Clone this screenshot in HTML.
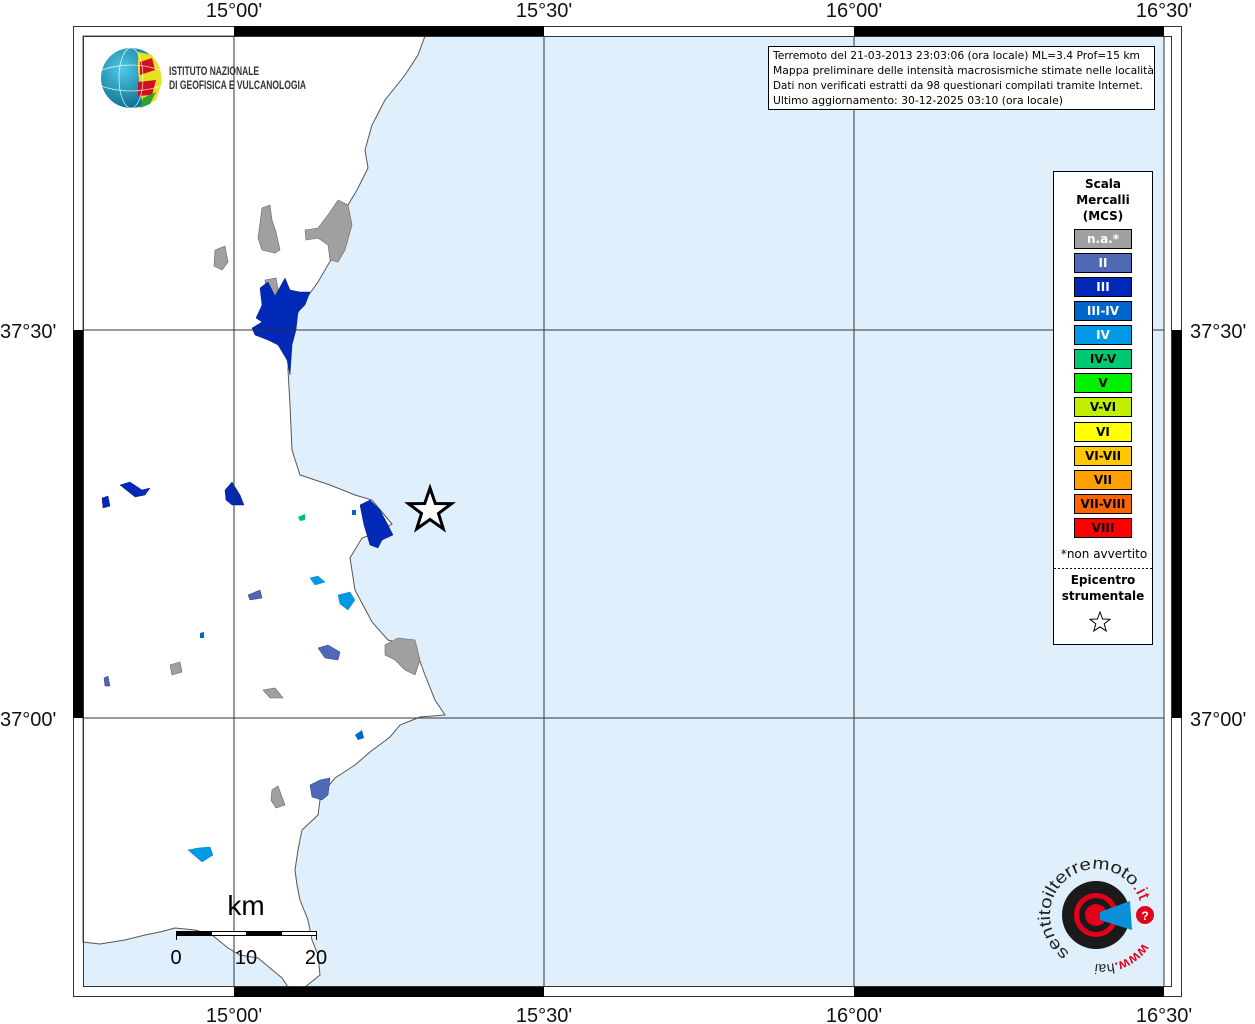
<!DOCTYPE html>
<html><head><meta charset="utf-8"><style>
html,body{margin:0;padding:0;background:#fff;width:1255px;height:1024px;overflow:hidden}
svg{display:block}
.ls{font-family:"Liberation Sans",sans-serif}
.dj{font-family:"DejaVu Sans",sans-serif}
</style></head><body>
<svg width="1255" height="1024" viewBox="0 0 1255 1024" xmlns="http://www.w3.org/2000/svg" class="ls">
<rect x="83" y="36" width="1081" height="951" fill="#dff0fc"/>
<path d="M83,36 L425,36 L418,55 L405,75 L385,100 L372,125 L365,150 L368,168 L357,190 L345,210 L337,235 L332,258 L318,282 L305,300 L295,318 L289,335 L288,370 L290,405 L292,450 L300,475 L330,485 L355,495 L372,500 L392,524 L378,532 L362,538 L350,558 L355,590 L372,622 L388,640 L415,648 L425,675 L435,700 L445,715 L420,717 L400,725 L390,737 L370,752 L355,765 L335,778 L325,790 L320,800 L318,815 L302,830 L298,850 L295,870 L297,885 L300,900 L308,920 L312,940 L318,955 L320,975 L305,987 L288,987 L282,978 L270,968 L258,958 L240,955 L228,948 L212,935 L195,930 L175,928 L160,932 L145,935 L125,940 L100,944 L83,942 Z" fill="#fff" stroke="#555" stroke-width="1"/>
<g fill="#a0a0a0" stroke="#666" stroke-width="0.6">
<path d="M262,208 L270,205 L272,220 L276,232 L280,250 L275,253 L262,250 L258,238 Z"/>
<path d="M305,230 L318,228 L330,212 L338,200 L348,205 L352,225 L345,250 L338,262 L330,260 L328,245 L318,238 L306,240 Z"/>
<path d="M215,250 L225,246 L228,262 L222,270 L214,266 Z"/>
<path d="M385,645 L398,638 L415,640 L420,660 L415,675 L405,670 L395,660 L385,655 Z"/>
<path d="M272,790 L278,786 L285,805 L276,808 L271,800 Z"/>
<path d="M170,665 L180,662 L182,672 L172,675 Z"/>
<path d="M263,690 L275,688 L283,698 L270,698 Z"/>
<path d="M265,280 L276,278 L280,300 L272,303 L266,292 Z"/>
</g>
<g fill="#0029b8" stroke="#102070" stroke-width="0.5">
<path d="M260,288 L268,282 L275,296 L285,278 L290,290 L300,292 L310,292 L305,305 L298,312 L296,330 L292,345 L290,375 L287,360 L278,345 L268,340 L255,335 L252,328 L262,322 L256,318 L262,305 Z"/>
<path d="M360,505 L370,500 L380,510 L388,525 L393,535 L382,540 L378,548 L370,545 L364,525 Z"/>
<path d="M225,490 L232,482 L240,495 L244,505 L232,505 L226,500 Z"/>
<path d="M120,485 L130,482 L142,490 L150,488 L145,495 L135,497 Z"/>
<path d="M102,498 L108,496 L110,506 L103,508 Z"/>
</g>
<g fill="#4f69b5" stroke="#2a3a80" stroke-width="0.5">
<path d="M310,785 L320,780 L330,778 L328,795 L322,800 L312,797 Z"/>
<path d="M318,648 L328,645 L340,652 L338,660 L325,658 Z"/>
<path d="M248,595 L260,590 L262,598 L250,600 Z"/>
<path d="M104,678 L108,676 L110,686 L105,686 Z"/>
</g>
<g fill="#0066cc"><path d="M355,735 L362,730 L364,738 L358,740 Z"/><path d="M200,633 L204,632 L204,638 L200,638 Z"/><path d="M352,510 L356,510 L356,515 L352,515 Z"/></g>
<g fill="#0099e6" stroke="#0070b0" stroke-width="0.4">
<path d="M188,850 L198,848 L210,847 L213,855 L202,862 L195,856 Z"/>
<path d="M338,595 L350,592 L355,600 L348,610 L340,604 Z"/>
<path d="M310,578 L318,576 L325,582 L315,585 Z"/>
</g>
<path d="M298,517 L305,514 L305,520 L300,521 Z" fill="#00c070"/>
<g stroke="#333" stroke-width="1">
<line x1="234" y1="36" x2="234" y2="987"/><line x1="544" y1="36" x2="544" y2="987"/><line x1="854" y1="36" x2="854" y2="987"/>
<line x1="83" y1="330" x2="1164" y2="330"/><line x1="83" y1="718" x2="1164" y2="718"/>
</g>
<g fill="none" stroke="#333" stroke-width="1">
<rect x="73.5" y="26.5" width="1108" height="970"/>
<rect x="83.5" y="36.5" width="1088" height="950"/>
<line x1="1164" y1="36" x2="1164" y2="987"/>
</g>
<g fill="#000">
<rect x="234" y="26" width="310" height="10"/><rect x="854" y="26" width="310" height="10"/>
<rect x="234" y="987" width="310" height="10"/><rect x="854" y="987" width="310" height="10"/>
<rect x="73" y="330" width="10" height="388"/><rect x="1172" y="330" width="10" height="388"/>
</g>
<g font-size="20" fill="#111">
<text x="234" y="17" text-anchor="middle">15°00'</text>
<text x="544" y="17" text-anchor="middle">15°30'</text>
<text x="854" y="17" text-anchor="middle">16°00'</text>
<text x="1164" y="17" text-anchor="middle">16°30'</text>
<text x="234" y="1022" text-anchor="middle">15°00'</text>
<text x="544" y="1022" text-anchor="middle">15°30'</text>
<text x="854" y="1022" text-anchor="middle">16°00'</text>
<text x="1164" y="1022" text-anchor="middle">16°30'</text>
<text x="0" y="338">37°30'</text><text x="0" y="726">37°00'</text>
<text x="1190" y="338">37°30'</text><text x="1190" y="726">37°00'</text>
</g>
<defs><radialGradient id="g1" cx="0.35" cy="0.35" r="0.7"><stop offset="0" stop-color="#50c8e8"/><stop offset="1" stop-color="#0a6d8c"/></radialGradient></defs>
<circle cx="131" cy="78" r="30" fill="url(#g1)"/>
<path d="M138,52 L152,55 L160,68 L162,82 L156,100 L143,107 L140,90 L138,70 Z" fill="#e8e020"/>
<path d="M140,62 L152,58 L155,70 L140,75 Z" fill="#d01020"/>
<path d="M138,82 L156,80 L152,95 L138,96 Z" fill="#d01020"/>
<path d="M143,98 L156,92 L150,104 L140,108 Z" fill="#30a030"/>
<g stroke="#fff" stroke-width="0.8" fill="none" opacity="0.8"><ellipse cx="131" cy="78" rx="12" ry="30"/><path d="M102,70 Q131,60 160,70 M101,86 Q131,96 161,86"/></g>
<text x="169" y="75" font-size="12" fill="#333" font-weight="bold" textLength="90" lengthAdjust="spacingAndGlyphs">ISTITUTO NAZIONALE</text>
<text x="169" y="89" font-size="12" fill="#333" font-weight="bold" textLength="137" lengthAdjust="spacingAndGlyphs">DI GEOFISICA E VULCANOLOGIA</text>
<rect x="768.5" y="46.5" width="386" height="63" fill="#fff" stroke="#000"/>
<g font-size="11" fill="#000" class="dj">
<text x="773" y="59" textLength="367" lengthAdjust="spacingAndGlyphs">Terremoto del 21-03-2013 23:03:06 (ora locale) ML=3.4 Prof=15 km</text>
<text x="773" y="74" textLength="381" lengthAdjust="spacingAndGlyphs">Mappa preliminare delle intensità macrosismiche stimate nelle località</text>
<text x="773" y="89" textLength="370" lengthAdjust="spacingAndGlyphs">Dati non verificati estratti da 98 questionari compilati tramite Internet.</text>
<text x="773" y="104" textLength="290" lengthAdjust="spacingAndGlyphs">Ultimo aggiornamento: 30-12-2025 03:10 (ora locale)</text>
</g>
<rect x="1053.5" y="171.5" width="99" height="473" fill="#fff" stroke="#000"/>
<g font-size="12" font-weight="bold" text-anchor="middle" class="dj">
<text x="1103" y="188">Scala</text><text x="1103" y="204">Mercalli</text><text x="1103" y="220">(MCS)</text>
</g>
<g stroke="#000" stroke-width="1">
<rect x="1074.5" y="229.5" width="57" height="19" fill="#a0a0a0"/>
<rect x="1074.5" y="253.5" width="57" height="19" fill="#4f69b5"/>
<rect x="1074.5" y="277.5" width="57" height="19" fill="#0029b8"/>
<rect x="1074.5" y="301.5" width="57" height="19" fill="#0066cc"/>
<rect x="1074.5" y="325.5" width="57" height="19" fill="#0099e6"/>
<rect x="1074.5" y="349.5" width="57" height="19" fill="#00c870"/>
<rect x="1074.5" y="373.5" width="57" height="19" fill="#00f000"/>
<rect x="1074.5" y="397.5" width="57" height="19" fill="#c0f000"/>
<rect x="1074.5" y="422.5" width="57" height="19" fill="#ffff00"/>
<rect x="1074.5" y="446.5" width="57" height="19" fill="#ffc800"/>
<rect x="1074.5" y="470.5" width="57" height="19" fill="#ffa000"/>
<rect x="1074.5" y="494.5" width="57" height="19" fill="#ff6400"/>
<rect x="1074.5" y="518.5" width="57" height="19" fill="#ff0000"/>
</g>
<g font-size="12" font-weight="bold" text-anchor="middle" class="dj">
<text x="1103" y="243" fill="#fff">n.a.*</text>
<text x="1103" y="267" fill="#fff">II</text>
<text x="1103" y="291" fill="#fff">III</text>
<text x="1103" y="315" fill="#fff">III-IV</text>
<text x="1103" y="339" fill="#fff">IV</text>
<text x="1103" y="363">IV-V</text>
<text x="1103" y="387">V</text>
<text x="1103" y="411">V-VI</text>
<text x="1103" y="436">VI</text>
<text x="1103" y="460">VI-VII</text>
<text x="1103" y="484">VII</text>
<text x="1103" y="508">VII-VIII</text>
<text x="1103" y="532">VIII</text>
</g>
<text x="1104" y="558" font-size="12" text-anchor="middle" class="dj">*non avvertito</text>
<line x1="1054" y1="568.5" x2="1152" y2="568.5" stroke="#000" stroke-dasharray="2,2"/>
<g font-size="12" font-weight="bold" text-anchor="middle" class="dj">
<text x="1103" y="584">Epicentro</text><text x="1103" y="600">strumentale</text>
</g>
<path d="M1100,612 L1102.6,619 L1110,619.3 L1104.2,623.9 L1106.2,631 L1100,626.9 L1093.8,631 L1095.8,623.9 L1090,619.3 L1097.4,619 Z" fill="#fff" stroke="#000"/>
<path d="M430,488 L435.3,503.5 L451.5,503.7 L438.5,513.4 L443.3,528.9 L430,519.5 L416.7,528.9 L421.5,513.4 L408.5,503.7 L424.7,503.5 Z" fill="#fff" stroke="#000" stroke-width="3"/>
<text x="246" y="915" font-size="28" text-anchor="middle">km</text>
<g stroke="#000" stroke-width="1">
<rect x="176.5" y="931.5" width="35" height="4" fill="#000"/><rect x="211.5" y="931.5" width="35" height="4" fill="#fff"/>
<rect x="246.5" y="931.5" width="35" height="4" fill="#000"/><rect x="281.5" y="931.5" width="35" height="4" fill="#fff"/>
<line x1="176.5" y1="931" x2="176.5" y2="940"/><line x1="316.5" y1="931" x2="316.5" y2="940"/>
</g>
<g font-size="20" text-anchor="middle"><text x="176" y="964">0</text><text x="246" y="964">10</text><text x="316" y="964">20</text></g>
<circle cx="1096" cy="915" r="34" fill="#1a1a1a"/>
<circle cx="1096" cy="915" r="22" fill="#e3001b"/>
<circle cx="1096" cy="915" r="17" fill="#1a1a1a"/>
<circle cx="1096" cy="915" r="11" fill="#e3001b"/>
<path d="M1100,912 L1130,901 L1132,930 L1100,920 Z" fill="#0a8fd8"/>
<circle cx="1145" cy="915" r="9" fill="#e3001b"/><text x="1145" y="920" font-size="12" font-weight="bold" fill="#fff" text-anchor="middle">?</text>
<defs><path id="arc" d="M1069.6,952.7 A46,46 0 1 1 1140.4,903.1"/><path id="arc2" d="M1143,943 A48,48 0 0 1 1092,963"/></defs>
<text font-size="17" fill="#222"><textPath href="#arc" textLength="174" lengthAdjust="spacingAndGlyphs">sentitoilterremoto<tspan fill="#e3001b">.it</tspan></textPath></text>
<text font-size="14" fill="#e3001b" font-weight="bold"><textPath href="#arc2">www.<tspan fill="#222" font-weight="normal">hai</tspan></textPath></text>
</svg>
</body></html>
